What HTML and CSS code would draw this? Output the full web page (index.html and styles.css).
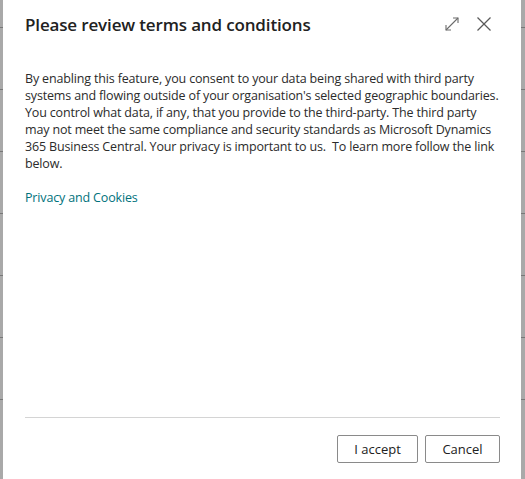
FILE: index.html
```html
<!DOCTYPE html>
<html lang="en">
<head>
    <meta charset="UTF-8">
    <meta name="viewport" content="width=device-width, initial-scale=1.0">
    <title>Please review terms and conditions</title>
    <link rel="stylesheet" href="styles.css">
</head>
<body>
    <div class="backdrop">
        <div class="bg-row"></div>
        <div class="bg-row"></div>
        <div class="bg-row"></div>
        <div class="bg-row"></div>
        <div class="bg-row"></div>
        <div class="bg-row"></div>
        <div class="bg-row"></div>
    </div>

    <div class="dialog" role="dialog" aria-labelledby="dialogTitle">
        <div class="dialog-header">
            <h1 id="dialogTitle">Please review terms and conditions</h1>
            <div class="header-actions">
                <button class="icon-btn" title="Expand">
                    <svg width="16" height="16" viewBox="0 0 16 16" fill="none" stroke="#6b6b6b" stroke-width="1.1">
                        <path d="M2 14 L14 2"/>
                        <path d="M9 2 H14 V7"/>
                        <path d="M2 9 V14 H7"/>
                    </svg>
                </button>
                <button class="icon-btn" title="Close">
                    <svg width="16" height="16" viewBox="0 0 16 16" fill="none" stroke="#5a5a5a" stroke-width="1.2">
                        <path d="M1.5 1.5 L14.5 14.5"/>
                        <path d="M14.5 1.5 L1.5 14.5"/>
                    </svg>
                </button>
            </div>
        </div>

        <div class="dialog-body">
            <p>By enabling this feature, you consent to your data being shared with third party systems and flowing outside of your organisation's selected geographic boundaries. You control what data, if any, that you provide to the third-party. The third party may not meet the same compliance and security standards as Microsoft Dynamics 365 Business Central. Your privacy is important to us.&nbsp; To learn more follow the link below.</p>
            <a href="#" class="link">Privacy and Cookies</a>
        </div>

        <div class="dialog-footer">
            <button class="btn btn-accept">I accept</button>
            <button class="btn btn-cancel">Cancel</button>
        </div>
    </div>
</body>
</html>
```

FILE: styles.css
```css
* {
    margin: 0;
    padding: 0;
    box-sizing: border-box;
}

body {
    font-family: 'Segoe UI', 'Open Sans', 'Noto Sans', sans-serif;
    width: 525px;
    height: 479px;
    overflow: hidden;
    background: #a9a9a9;
    color: #2b2b2b;
    position: relative;
}

/* page behind the modal, dimmed */
.backdrop {
    display: flex;
    flex-direction: column;
    padding-top: 27px;
}

.bg-row {
    height: 62px;
    border-top: 1px solid #787878;
}

.dialog {
    position: absolute;
    top: 0;
    left: 3px;
    right: 4px;
    bottom: 0;
    background: #fff;
    display: flex;
    flex-direction: column;
    padding: 0 21px 0 22px;
}

.dialog-header {
    display: flex;
    align-items: center;
    justify-content: space-between;
    height: 48px;
}

.dialog-header h1 {
    font-size: 17px;
    font-weight: 600;
    color: #212121;
    letter-spacing: -0.15px;
}

.header-actions {
    display: flex;
    gap: 16px;
    margin-right: 8px;
}

.icon-btn {
    background: none;
    border: none;
    width: 16px;
    height: 16px;
    display: flex;
    cursor: pointer;
}

.dialog-body {
    flex: 1;
    padding-top: 22px;
    font-size: 12.5px;
    line-height: 17px;
    letter-spacing: -0.16px;
}

.dialog-body p {
    margin-bottom: 17px;
}

.link {
    color: #00727c;
    text-decoration: none;
}

.dialog-footer {
    display: flex;
    justify-content: flex-end;
    gap: 7px;
    border-top: 1px solid #d4d4d4;
    padding-top: 17px;
    margin-bottom: 16px;
}

.btn {
    font-family: inherit;
    font-size: 13px;
    color: #212121;
    background: #fff;
    border: 1px solid #8a8a8a;
    border-radius: 2px;
    height: 28px;
    cursor: pointer;
}

.btn-accept {
    width: 81px;
}

.btn-cancel {
    width: 75px;
}
```
